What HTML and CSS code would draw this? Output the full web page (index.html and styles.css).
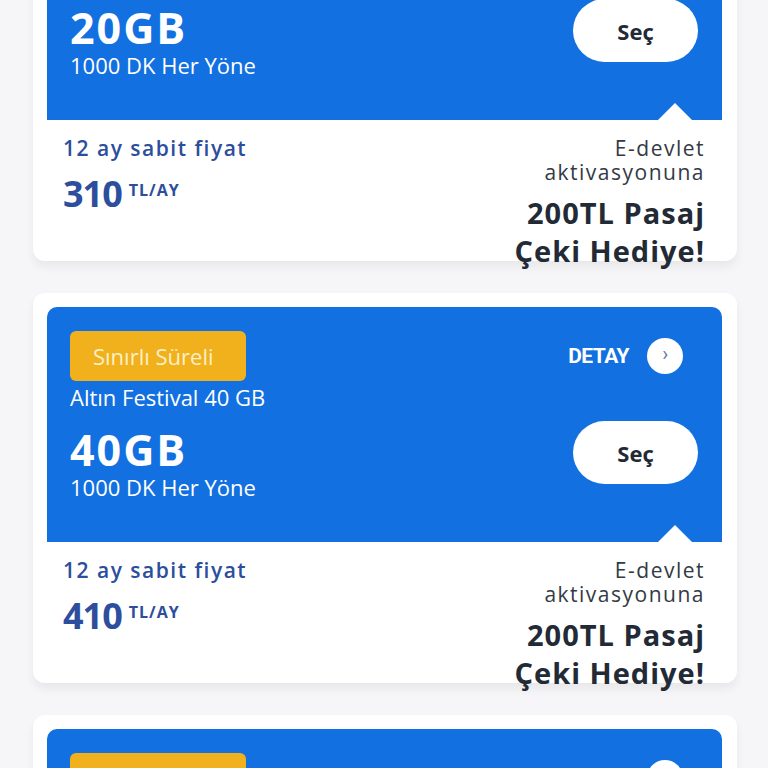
FILE: index.html
```html
<!DOCTYPE html>
<html lang="tr">
<head>
    <meta charset="UTF-8">
    <meta name="viewport" content="width=device-width, initial-scale=1.0">
    <title>Paketler</title>
    <link rel="stylesheet" href="styles.css">
</head>
<body>
    <div class="package-list">

        <div class="package-card">
            <div class="package-top">
                <div class="top-row">
                    <span class="badge">Sınırlı Süreli</span>
                    <a href="#" class="detail-link">DETAY <span class="detail-icon">&#8250;</span></a>
                </div>
                <div class="campaign-name">Altın Festival 20 GB</div>
                <div class="main-row">
                    <div>
                        <div class="data-amount">20GB</div>
                        <div class="minutes">1000 DK Her Yöne</div>
                    </div>
                    <button class="select-btn">Seç</button>
                </div>
                <span class="notch"></span>
            </div>
            <div class="package-bottom">
                <div class="price-col">
                    <div class="price-label">12 ay sabit fiyat</div>
                    <div class="price"><span class="price-value">310</span><span class="price-unit">TL/AY</span></div>
                </div>
                <div class="gift-col">
                    <div class="gift-note">E-devlet<br>aktivasyonuna</div>
                    <div class="gift-title">200TL Pasaj<br>Çeki Hediye!</div>
                </div>
            </div>
        </div>

        <div class="package-card">
            <div class="package-top">
                <div class="top-row">
                    <span class="badge">Sınırlı Süreli</span>
                    <a href="#" class="detail-link">DETAY <span class="detail-icon">&#8250;</span></a>
                </div>
                <div class="campaign-name">Altın Festival 40 GB</div>
                <div class="main-row">
                    <div>
                        <div class="data-amount">40GB</div>
                        <div class="minutes">1000 DK Her Yöne</div>
                    </div>
                    <button class="select-btn">Seç</button>
                </div>
                <span class="notch"></span>
            </div>
            <div class="package-bottom">
                <div class="price-col">
                    <div class="price-label">12 ay sabit fiyat</div>
                    <div class="price"><span class="price-value">410</span><span class="price-unit">TL/AY</span></div>
                </div>
                <div class="gift-col">
                    <div class="gift-note">E-devlet<br>aktivasyonuna</div>
                    <div class="gift-title">200TL Pasaj<br>Çeki Hediye!</div>
                </div>
            </div>
        </div>

        <div class="package-card">
            <div class="package-top">
                <div class="top-row">
                    <span class="badge">Sınırlı Süreli</span>
                    <a href="#" class="detail-link">DETAY <span class="detail-icon">&#8250;</span></a>
                </div>
                <div class="campaign-name">Altın Festival 60 GB</div>
                <div class="main-row">
                    <div>
                        <div class="data-amount">60GB</div>
                        <div class="minutes">1000 DK Her Yöne</div>
                    </div>
                    <button class="select-btn">Seç</button>
                </div>
                <span class="notch"></span>
            </div>
            <div class="package-bottom">
                <div class="price-col">
                    <div class="price-label">12 ay sabit fiyat</div>
                    <div class="price"><span class="price-value">510</span><span class="price-unit">TL/AY</span></div>
                </div>
                <div class="gift-col">
                    <div class="gift-note">E-devlet<br>aktivasyonuna</div>
                    <div class="gift-title">200TL Pasaj<br>Çeki Hediye!</div>
                </div>
            </div>
        </div>

    </div>
</body>
</html>
```

FILE: styles.css
```css
body {
    margin: 0;
    padding: 0;
    background-color: #f6f6f8;
    font-family: 'Open Sans', sans-serif;
    overflow: hidden;
    height: 768px;
}

.package-list {
    display: flex;
    flex-direction: column;
    gap: 32px;
    margin-top: -129px; /* list is scrolled */
    padding: 0 31px 0 33px;
}

.package-card {
    background-color: #ffffff;
    border-radius: 12px;
    padding: 14px 15px 0 14px;
    height: 376px;
    box-shadow: 0 6px 10px rgba(0, 0, 0, 0.06);
}

.package-top {
    position: relative;
    background-color: #1270e0;
    border-radius: 10px 10px 0 0;
    color: #ffffff;
    padding: 24px 24px 0 23px;
    height: 211px;
}

.top-row {
    display: flex;
    justify-content: space-between;
    align-items: center;
    height: 50px;
}

.badge {
    background-color: #f0b11c;
    color: #fcefc9;
    font-size: 22px;
    border-radius: 6px;
    padding: 0 0 0 23px;
    height: 50px;
    line-height: 50px;
    box-sizing: border-box;
    width: 176px;
    white-space: nowrap;
}

.detail-link {
    display: flex;
    align-items: center;
    gap: 18px;
    color: #ffffff;
    text-decoration: none;
    font-family: 'Roboto', sans-serif;
    font-weight: 700;
    font-size: 21px;
    letter-spacing: -0.5px;
    margin-right: 15px;
}

.detail-icon {
    width: 36px;
    height: 36px;
    border-radius: 50%;
    background-color: #ffffff;
    color: #6a7a99;
    font-size: 20px;
    line-height: 33px;
    text-align: center;
    font-weight: 400;
}

.campaign-name {
    font-size: 22px;
    line-height: 28px;
    margin-top: 2px;
}

.main-row {
    display: flex;
    justify-content: space-between;
    align-items: flex-start;
    margin-top: 15px;
}

.data-amount {
    font-size: 43px;
    font-weight: 700;
    line-height: 48px;
    letter-spacing: 2px;
}

.minutes {
    font-size: 22px;
    line-height: 26px;
}

.select-btn {
    width: 125px;
    height: 63px;
    border: none;
    border-radius: 32px;
    background-color: #ffffff;
    color: #222a36;
    font-family: 'Open Sans', sans-serif;
    font-size: 22px;
    font-weight: 700;
    margin-top: -5px;
}

.notch {
    position: absolute;
    right: 30px;
    bottom: 0;
    width: 0;
    height: 0;
    border-left: 17px solid transparent;
    border-right: 17px solid transparent;
    border-bottom: 17px solid #ffffff;
}

.package-bottom {
    display: flex;
    justify-content: space-between;
    padding: 14px 17px 0 16px;
}

.price-label {
    color: #2c4e9c;
    font-size: 21px;
    font-weight: 600;
    letter-spacing: 1.5px;
    line-height: 28px;
}

.price {
    display: flex;
    align-items: flex-start;
    color: #2c4e9c;
    margin-top: 8px;
}

.price-value {
    font-size: 36px;
    font-weight: 700;
    line-height: 48px;
    letter-spacing: -1px;
}

.price-unit {
    font-size: 16px;
    font-weight: 700;
    letter-spacing: 1px;
    margin-left: 7px;
    margin-top: 9px;
}

.gift-col {
    text-align: right;
    padding-top: 2px;
}

.gift-note {
    color: #333a44;
    font-size: 21px;
    letter-spacing: 1.5px;
    line-height: 24px;
}

.gift-title {
    color: #222a36;
    font-size: 29px;
    font-weight: 700;
    letter-spacing: 1px;
    line-height: 38px;
    margin-top: 10px;
}
```
